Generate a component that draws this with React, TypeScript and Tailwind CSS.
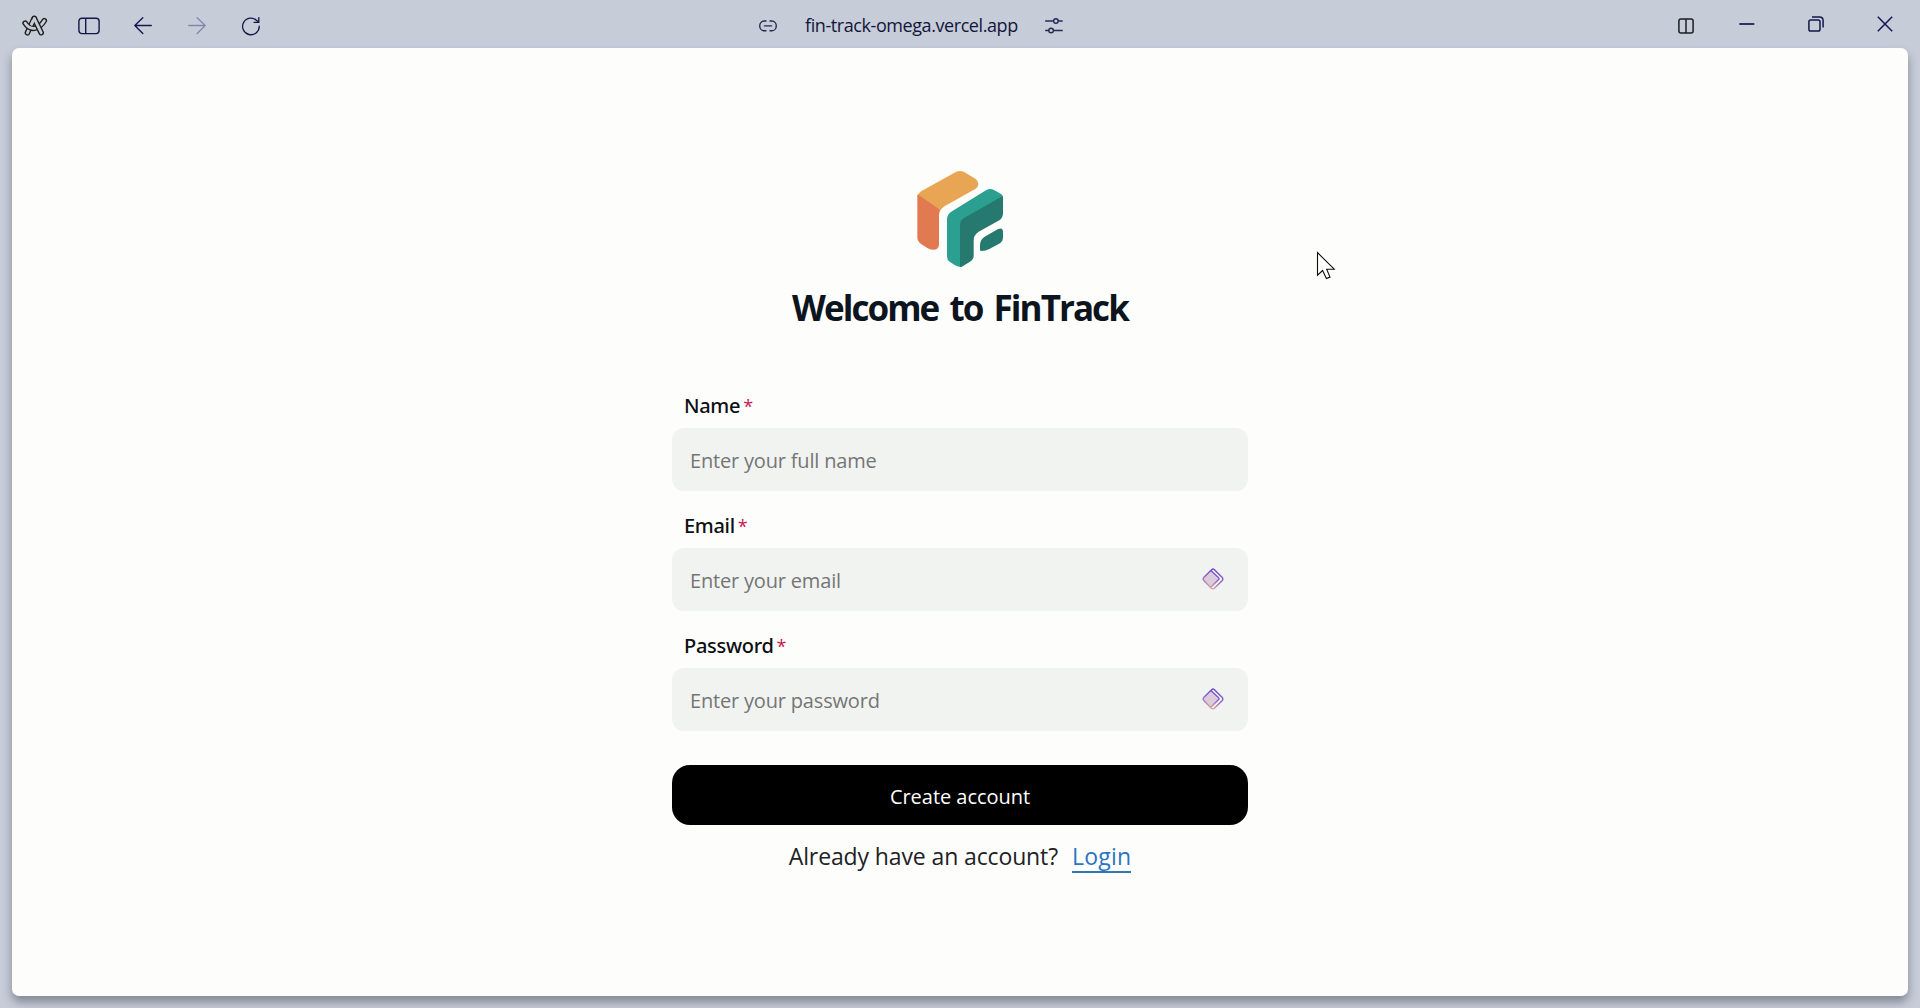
import type { ReactNode } from "react";

const NAVY = "#12184a";
const CHROME = "#c7ccd9";

const ARC_LEFT_LEG = "M12.2 3.4L5.4 17.8";
const ARC_SWOOSH = "M3.1 8.1Q7 14.2 12.4 13.3Q18.6 12 22.3 5.7";
const ARC_RIGHT_LEG = "M12.3 3.6L19.2 17.7";

function ArcLogo() {
  return (
    <svg width="26" height="22" viewBox="0 0 26 22" fill="none" strokeLinecap="round" strokeLinejoin="round">
      <path d={ARC_LEFT_LEG} stroke="#1f221c" strokeWidth="5.6" />
      <path d={ARC_LEFT_LEG} stroke={CHROME} strokeWidth="2.8" />
      <path d={ARC_SWOOSH} stroke="#1f221c" strokeWidth="5.6" />
      <path d={ARC_SWOOSH} stroke={CHROME} strokeWidth="2.8" />
      <path d={ARC_RIGHT_LEG} stroke="#1f221c" strokeWidth="5.6" />
      <path d="M12.3 3.6L9.6 9.2" stroke={CHROME} strokeWidth="2.8" />
      <path d={ARC_RIGHT_LEG} stroke={CHROME} strokeWidth="2.8" />
    </svg>
  );
}

function SidebarIcon() {
  return (
    <svg width="22" height="18" viewBox="0 0 22 18" fill="none" stroke={NAVY} strokeWidth="1.4">
      <rect x="0.9" y="1.2" width="20.2" height="15.4" rx="3" />
      <path d="M7.7 1.2V16.6" />
    </svg>
  );
}

function ArrowIcon({ forward = false }: { forward?: boolean }) {
  return (
    <svg width="18" height="18" viewBox="0 0 18 18" fill="none" stroke={forward ? "#8288ac" : NAVY} strokeWidth="1.3" strokeLinecap="round" strokeLinejoin="round">
      {forward ? <path d="M0.7 8.5H17.2M9.2 0.7L17.2 8.5L9.2 16.5" /> : <path d="M17.3 8.5H0.8M8.8 0.7L0.8 8.5L8.8 16.5" />}
    </svg>
  );
}

function ReloadIcon() {
  return (
    <svg width="20" height="20" viewBox="0 0 20 20" fill="none" stroke={NAVY} strokeWidth="1.3" strokeLinecap="round" strokeLinejoin="round">
      <path d="M18.2 10.2A8.3 8.3 0 1 1 15.8 4.6L17.6 6.2" />
      <path d="M17.8 1.6V6.3H13" />
    </svg>
  );
}

function LinkIcon() {
  return (
    <svg width="18" height="12" viewBox="0 0 18 12" fill="none" stroke="#262b50" strokeWidth="1.4" strokeLinecap="round">
      <path d="M7 1H5.3A4.6 4.9 0 0 0 5.3 10.8H7M11 1H12.7A4.6 4.9 0 0 1 12.7 10.8H11M5.4 5.9H12.6" />
    </svg>
  );
}

function SlidersIcon() {
  return (
    <svg width="18" height="17" viewBox="0 0 18 17" fill="none" stroke="#262b50" strokeWidth="1.4" strokeLinecap="round">
      <path d="M0.7 4H8.4M13.4 4H17.2M0.7 13.5H3.6M8.6 13.5H17.2" />
      <circle cx="10.9" cy="4" r="2.3" />
      <circle cx="6.1" cy="13.5" r="2.3" />
    </svg>
  );
}

function BrandMark() {
  return (
    <svg width="140" height="130" viewBox="0 0 420 390">
      <path fill="#e8a654" d="M82 140Q84 129 96 122L196 67Q210 59 224 67L256 86Q265 92 265 102Q265 111 256 117L170 165Q151 175 147 190Z" />
      <path fill="#e17a50" d="M83 133L150 179Q147 186 147 196V284Q146 300 128 299Q120 299 112 294L92 281Q82 274 82 262V140Z" />
      <path fill="#2ba090" d="M171 208Q172 192 186 184L288 121Q300 114 312 120L333 132Q338 135 339 142L240 200L215 216V351Q203 351 195 346L180 336Q171 330 171 320Z" />
      <path fill="#26796f" d="M338 138Q339 140 339 146V190Q339 204 328 211L266 245Q251 254 251 272V318Q251 328 240 335L219 348Q215 351 210 351V224Q210 212 221 205Z" />
      <path fill="#26796f" d="M270 300V284Q271 268 284 260L323 238Q339 230 339 246V264Q339 274 330 280L298 297Q288 303 274 303Q270 303 270 300Z" />
    </svg>
  );
}

function AutofillIcon() {
  return (
    <svg className="mb-[2px]" width="22" height="22" viewBox="0 0 22 22" fill="none" strokeLinejoin="round">
      <defs>
        <linearGradient id="autofill" x1="14" y1="1" x2="8" y2="21" gradientUnits="userSpaceOnUse">
          <stop stopColor="#6a48c8" />
          <stop offset="0.5" stopColor="#8b62c6" />
          <stop offset="1" stopColor="#e3a69c" />
        </linearGradient>
      </defs>
      <path d="M9.6 1.7Q11 0.5 12.4 1.7L20.3 9.6Q21.4 11 20.3 12.4L12.4 20.3Q11 21.4 9.6 20.3L8 18.7" stroke="url(#autofill)" strokeWidth="1.4" />
      <path d="M9.6 1.7L1.7 9.6Q0.6 11 1.7 12.4L8.6 19.4L16.6 11.6Q17.4 10.6 16.6 9.8L8.9 2.4Z" fill="#dccbdc" stroke="url(#autofill)" strokeWidth="1.4" />
    </svg>
  );
}

function Field({ label, placeholder, icon }: { label: string; placeholder: string; icon?: ReactNode }) {
  return (
    <label className="block">
      <span className="flex h-7 items-start pt-px pl-3 text-[20px] leading-7">
        <span className="font-['Noto_Sans',sans-serif] font-medium tracking-[-0.3px] text-[#0c0f14]">{label}</span>
        <span className="ml-[3px] text-[18px] leading-7 text-[#c9184f]">*</span>
      </span>
      <span className="mt-[9px] flex h-[63px] items-center rounded-[12px] bg-[#f1f3f1] pr-6 pl-[18px]">
        <input
          className="h-full min-w-0 flex-1 bg-transparent pt-[2px] text-[20px] tracking-[-0.18px] outline-none placeholder:text-[#757575]"
          placeholder={placeholder}
        />
        {icon}
      </span>
    </label>
  );
}

export default function App() {
  return (
    <div className="relative flex h-[1008px] w-[1920px] flex-col overflow-hidden bg-[#c7ccd9] font-['Open_Sans',sans-serif]">
      <header className="grid h-12 shrink-0 grid-cols-[1fr_auto_1fr] items-center pt-[3px]">
        <div className="flex items-center pl-[22px]">
          <ArcLogo />
          <div className="ml-[30px] flex"><SidebarIcon /></div>
          <div className="ml-[34px] flex"><ArrowIcon /></div>
          <div className="ml-9 flex"><ArrowIcon forward /></div>
          <div className="ml-[35px] flex"><ReloadIcon /></div>
        </div>
        <div className="flex items-center pr-[98px]">
          <LinkIcon />
          <span className="ml-7 w-[213px] pb-[2px] text-[18px] leading-6 tracking-[-0.42px] whitespace-nowrap text-[#12163a]">fin-track-omega.vercel.app</span>
          <div className="ml-[27px] flex"><SlidersIcon /></div>
        </div>
        <div className="flex items-center justify-end pr-[27px]">
          <svg width="16" height="16" viewBox="0 0 16 16" fill="none" stroke="#1c1e20" strokeWidth="1.5">
            <rect x="0.9" y="0.9" width="14.2" height="14.2" rx="2" />
            <path d="M8 1V15" />
          </svg>
          <svg className="mb-1 ml-[45px]" width="16" height="16" viewBox="0 0 16 16" fill="none" stroke={NAVY} strokeWidth="1.7">
            <path d="M0.3 8H15.3" />
          </svg>
          <svg className="mb-1 ml-[53px]" width="16" height="16" viewBox="0 0 16 16" fill="none" stroke={NAVY} strokeWidth="1.5">
            <rect x="0.9" y="4" width="11.1" height="11.1" rx="1.8" />
            <path d="M4 1H11.4Q15.1 1 15.1 4.6V11.6" />
          </svg>
          <svg className="mb-1 ml-[53px]" width="16" height="16" viewBox="0 0 16 16" fill="none" stroke={NAVY} strokeWidth="1.5">
            <path d="M0.8 0.8L15.2 15.2M15.2 0.8L0.8 15.2" />
          </svg>
        </div>
      </header>

      <main className="mx-3 flex h-[948px] shrink-0 flex-col items-center rounded-[7px] bg-[#fdfdfb] pt-[102px] shadow-[0_6px_10px_rgba(50,54,60,0.45)]">
        <BrandMark />
        <h1 className="mt-[6px] text-[35px] leading-[44px] font-bold tracking-[-1.95px] text-[#0c1420] [word-spacing:4px]">Welcome to FinTrack</h1>
        <form className="mt-[61px] flex w-[576px] flex-col gap-5">
          <Field label="Name" placeholder="Enter your full name" />
          <Field label="Email" placeholder="Enter your email" icon={<AutofillIcon />} />
          <Field label="Password" placeholder="Enter your password" icon={<AutofillIcon />} />
          <button type="button" className="mt-[14px] h-[60px] rounded-[18px] bg-black pt-1 text-[20px] tracking-[-0.03px] text-white">Create account</button>
        </form>
        <p className="mt-[15px] flex text-[23px] leading-8 tracking-[-0.12px] text-[#1d2226]">
          <span>Already have an account?</span>
          <a className="ml-[14px] h-[33px] border-b-2 border-[#2e78b5] tracking-[0.2px] text-[#2b74c4]">Login</a>
        </p>
      </main>

      <svg className="absolute top-[251px] left-[1316px]" width="21" height="30" viewBox="0 0 21 30">
        <path d="M1.5 1.6V24.2L6.6 19.5L10.4 27.6L14 26.1L10.7 18.2H18.2Z" fill="#fff" stroke="#0c0e12" strokeWidth="1.1" />
      </svg>
    </div>
  );
}
